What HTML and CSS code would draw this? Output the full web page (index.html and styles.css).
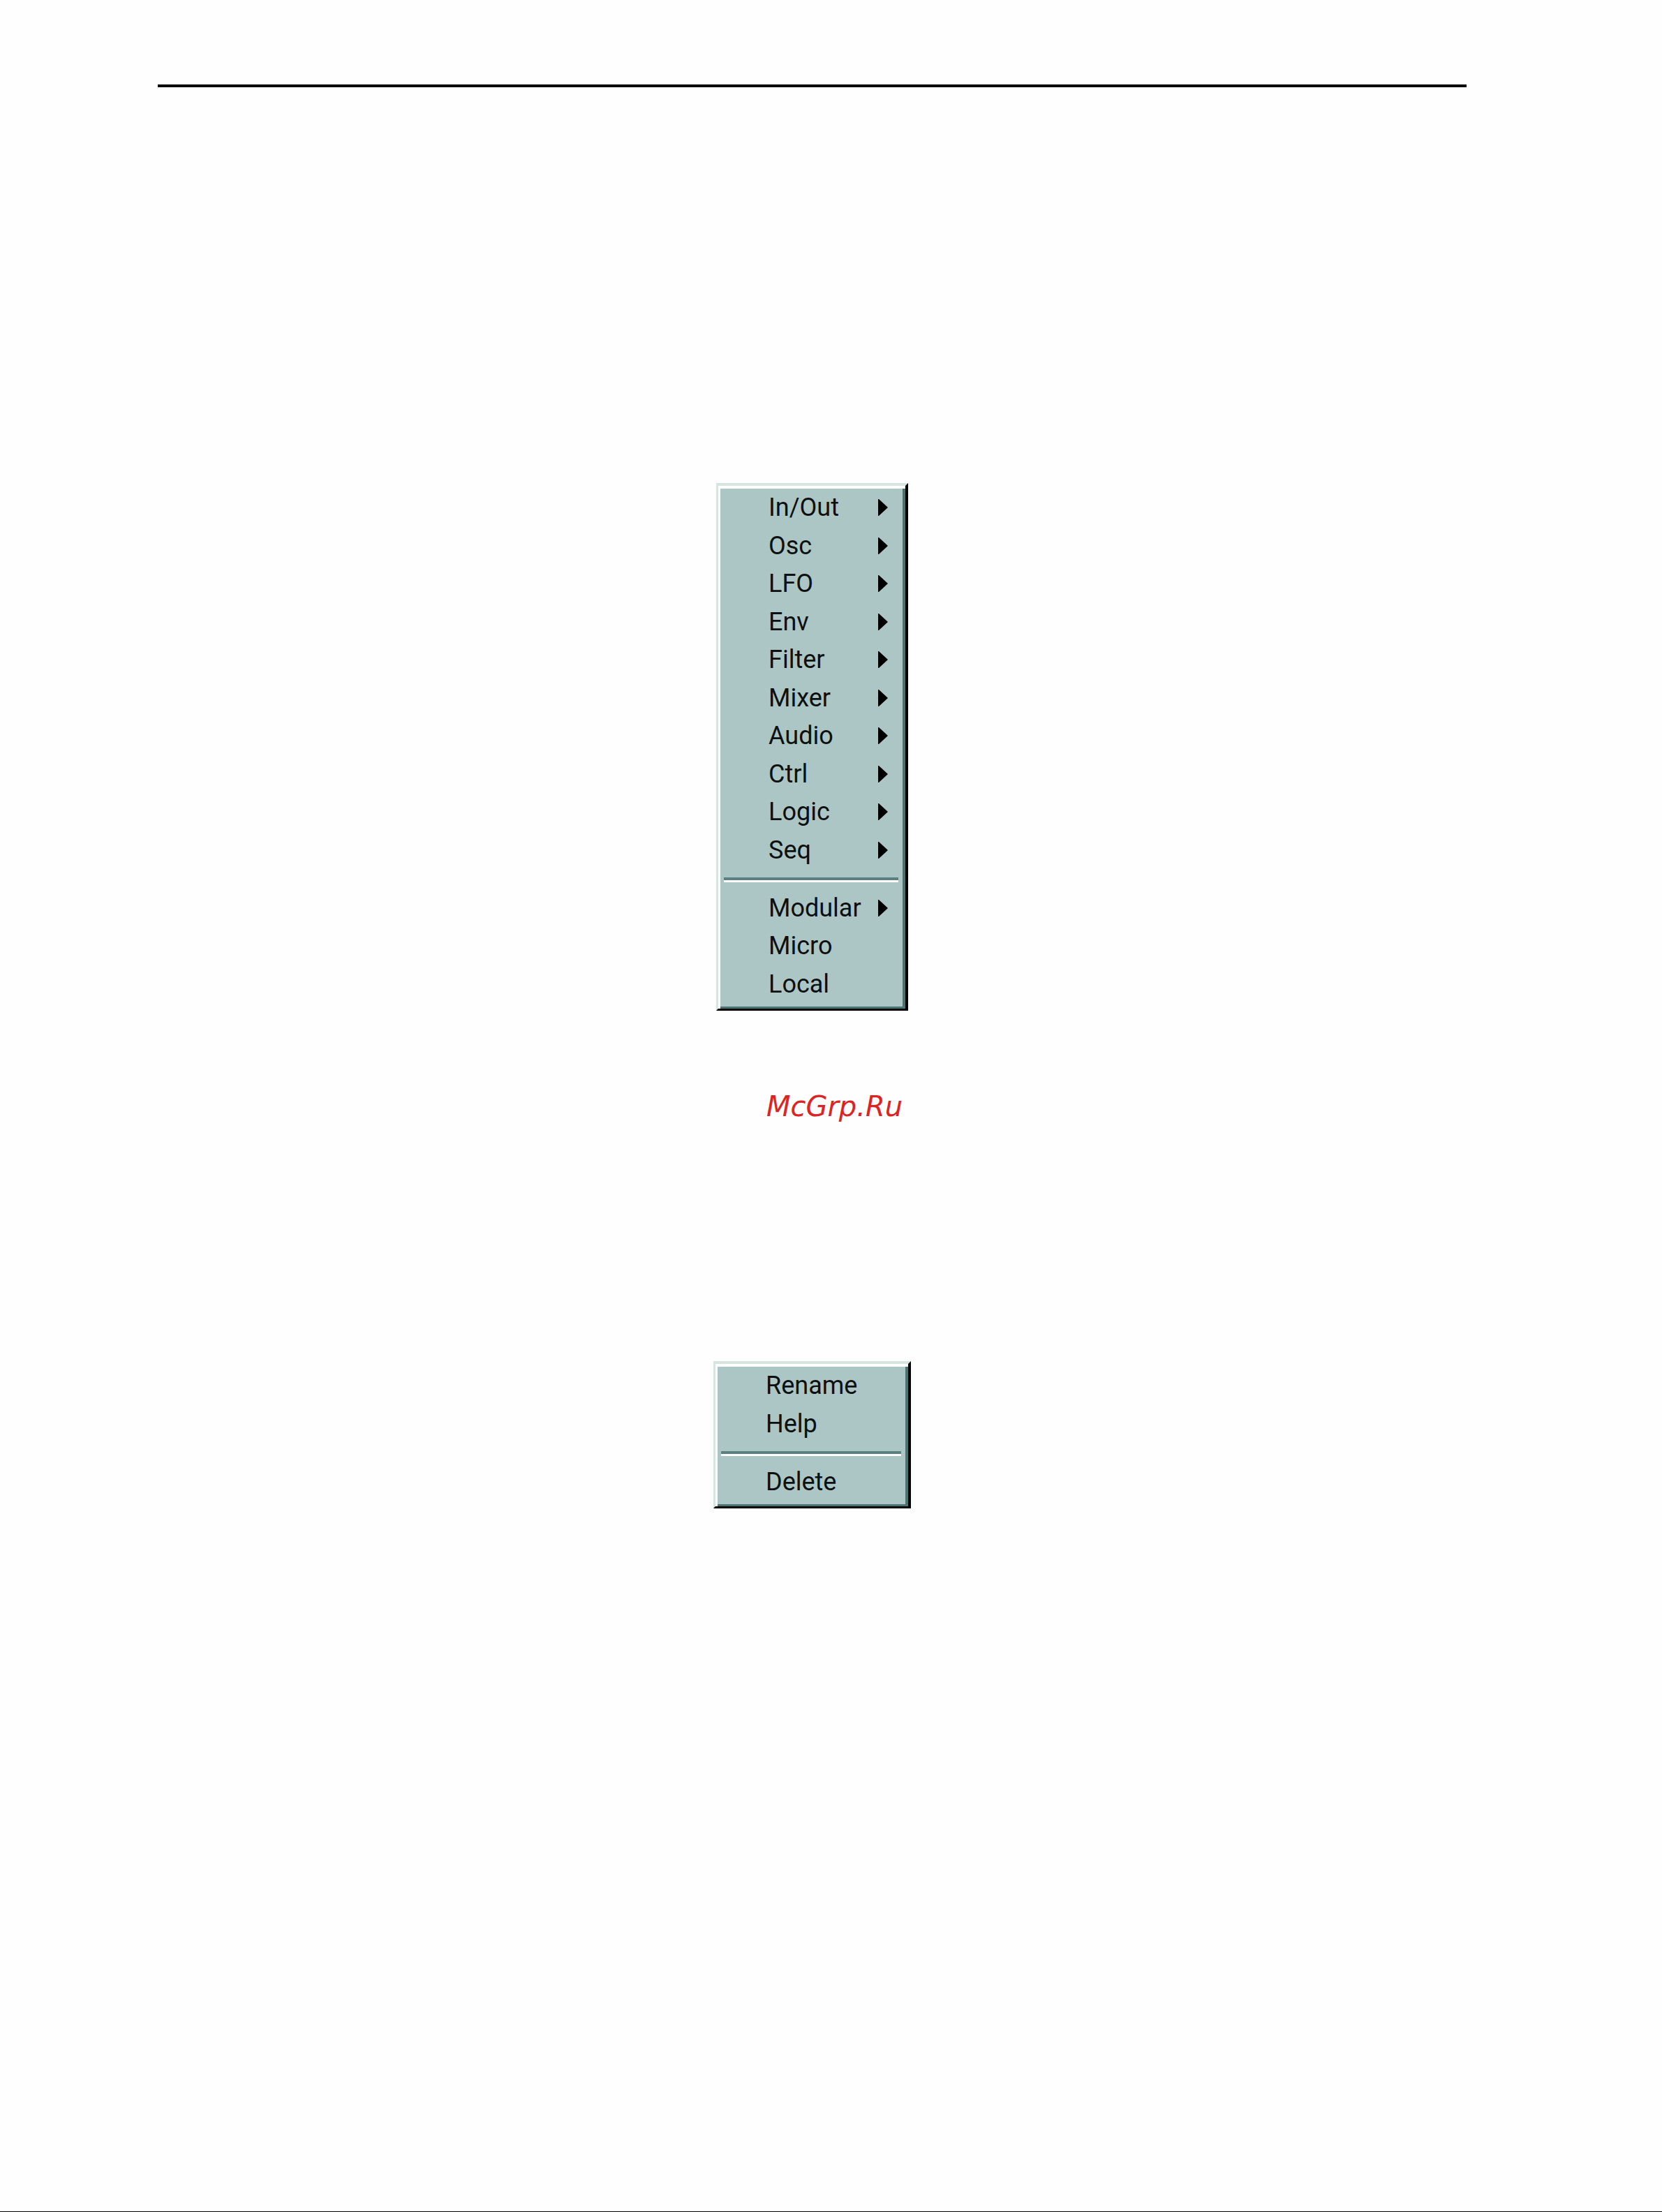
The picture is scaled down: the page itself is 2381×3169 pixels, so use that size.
FILE: index.html
```
<!DOCTYPE html>
<html lang="en">
<head>
  <meta charset="utf-8">
  <meta name="viewport" content="width=device-width, initial-scale=1">
  <title>Pop-up menus</title>
  <link rel="stylesheet" href="styles.css">
</head>
<body>
  <svg class="symbols" aria-hidden="true">
    <symbol id="arrow" viewBox="0 0 14 24"><path d="M0 0h1l13 12L1 24H0z"/></symbol>
  </svg>
  <hr class="rule">
  <main class="content">
    <ul class="menu menu-modules" aria-label="Modules">
      <li><button type="button" class="item">In/Out<svg class="arrow"><use href="#arrow"/></svg></button></li>
      <li><button type="button" class="item">Osc<svg class="arrow"><use href="#arrow"/></svg></button></li>
      <li><button type="button" class="item">LFO<svg class="arrow"><use href="#arrow"/></svg></button></li>
      <li><button type="button" class="item">Env<svg class="arrow"><use href="#arrow"/></svg></button></li>
      <li><button type="button" class="item">Filter<svg class="arrow"><use href="#arrow"/></svg></button></li>
      <li><button type="button" class="item">Mixer<svg class="arrow"><use href="#arrow"/></svg></button></li>
      <li><button type="button" class="item">Audio<svg class="arrow"><use href="#arrow"/></svg></button></li>
      <li><button type="button" class="item">Ctrl<svg class="arrow"><use href="#arrow"/></svg></button></li>
      <li><button type="button" class="item">Logic<svg class="arrow"><use href="#arrow"/></svg></button></li>
      <li><button type="button" class="item">Seq<svg class="arrow"><use href="#arrow"/></svg></button></li>
      <li class="separator" role="separator"></li>
      <li><button type="button" class="item">Modular<svg class="arrow"><use href="#arrow"/></svg></button></li>
      <li><button type="button" class="item">Micro</button></li>
      <li><button type="button" class="item">Local</button></li>
    </ul>
    <p class="site">McGrp.Ru</p>
    <ul class="menu menu-module" aria-label="Module">
      <li><button type="button" class="item">Rename</button></li>
      <li><button type="button" class="item">Help</button></li>
      <li class="separator" role="separator"></li>
      <li><button type="button" class="item">Delete</button></li>
    </ul>
  </main>
  <hr class="page-end">
</body>
</html>
```

FILE: styles.css
```
* {
  box-sizing: border-box;
}

body {
  margin: 0;
  min-height: 100vh;
  display: flex;
  flex-direction: column;
  background: #fefefe;
  color: #000;
  font-family: Roboto, "Liberation Sans", sans-serif;
}

.symbols {
  display: none;
}

.rule {
  height: 4px;
  margin: 121px 280px 0 226px;
  border: 0;
  background: #000;
}

.content {
  display: flex;
  flex-direction: column;
  padding-top: 567px;
}

/* The menus are centred under the rule, whose right margin is 54px wider. */
.menu {
  align-self: center;
  margin: 0 54px 0 0;
  padding: 4px 0 8px;
  list-style: none;
  background: #acc5c5;
  border-style: solid;
  border-width: 4px 4px 3px 3px;
  border-color: #d6e5e2 #000 #000 #d6e5e2;
  box-shadow: inset 3px 4px 0 #fff, inset -4px -3px 0 #4d7272;
}

.menu-modules {
  width: 275px;
}

.menu-module {
  width: 283px;
}

.item {
  display: flex;
  align-items: center;
  justify-content: space-between;
  width: 100%;
  height: 54px;
  padding: 0 25px 0 72px;
  border: 0;
  background: none;
  color: #0c1010;
  font: inherit;
  font-size: 36px;
  line-height: 54px;
  text-align: left;
}

/* Rows alternate so that the average pitch is half a pixel larger. */
li:nth-child(even) .item {
  height: 55px;
}

.arrow {
  width: 14px;
  height: 24px;
}

.separator {
  height: 7px;
  margin: 12px 10px 9px 8px;
  border-top: 4px solid #5c8080;
  background: #fff;
}

.site {
  margin: 112px 0 340px;
  padding-left: 10px;
  color: #dc2424;
  font-family: "DejaVu Sans", sans-serif;
  font-size: 40px;
  font-style: italic;
  line-height: 50px;
  text-align: center;
}

.page-end {
  width: 100%;
  height: 1px;
  margin: auto 0 0;
  border: 0;
  background: #000;
}
```
